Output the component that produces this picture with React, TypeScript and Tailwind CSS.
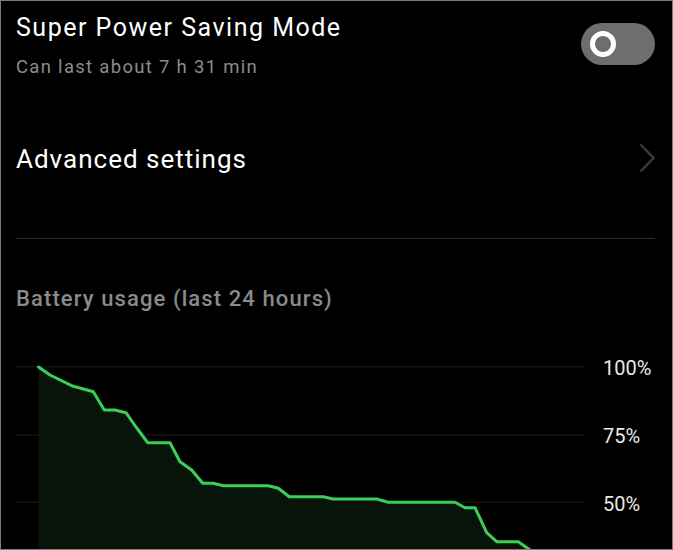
import React from "react"

// battery level samples, in chart-local pixels (x, y)
const levelPoints: [number, number][] = [
  [37.5, 17], [49, 25], [70.7, 35.7], [92.3, 41.7], [103.3, 60], [114, 60],
  [125, 62.7], [135, 77], [146.7, 92.7], [169, 92.7], [179, 111.7], [190.7, 120],
  [201.7, 133.3], [212.3, 133.3], [222.3, 135.7], [267.3, 135.7], [277.3, 138.3],
  [288.3, 146.7], [322.3, 146.7], [332, 149], [375.7, 149], [387.3, 152.3],
  [454, 152.3], [464, 157.7], [474, 157.7], [485.7, 182.7], [495.7, 191.7],
  [517.3, 191.7], [529, 200], [539, 210],
]

const gridY = [16.7, 85, 152.3]
const labels = ["100%", "75%", "50%"]

function UsageChart() {
  const line = levelPoints.map(([x, y]) => `${x},${y}`).join(" ")
  const first = levelPoints[0]
  const last = levelPoints[levelPoints.length - 1]
  const area = `${line} ${last[0]},220 ${first[0]},220`

  return (
    <div className="flex h-[199px] overflow-hidden">
      <svg width="589" height="199" className="shrink-0">
        {gridY.map((y) => (
          <line key={y} x1="15" x2="584" y1={y} y2={y} stroke="#151515" strokeWidth="1.5" />
        ))}
        <polygon points={area} fill="#06140a" />
        <polyline
          points={line}
          fill="none"
          stroke="#3ccf58"
          strokeWidth="3"
          strokeLinejoin="round"
          strokeLinecap="round"
        />
      </svg>
      <div className="flex flex-col gap-[48px] pl-[13px] pt-[8px] text-[20px] leading-[20px] text-[#e8e8e8]">
        {labels.map((l) => (
          <span key={l}>{l}</span>
        ))}
      </div>
    </div>
  )
}

export default function App() {
  return (
    <div
      className="w-[673px] h-[550px] overflow-hidden bg-black border border-[#7c7c7c]"
      style={{ fontFamily: "Roboto, 'Noto Sans', sans-serif" }}
    >
      {/* power saving toggle */}
      <div className="flex justify-between h-[99px] pl-[15px] pr-[17px] pt-[12px]">
        <div>
          <div className="text-[25px] leading-[29px] tracking-[1.5px] text-white">Super Power Saving Mode</div>
          <div className="mt-[14px] text-[18.5px] leading-[22px] tracking-[1.3px] text-[#8c8c8c]">
            Can last about 7 h 31 min
          </div>
        </div>
        <div className="mt-[10px] flex items-center w-[74px] h-[42px] rounded-full bg-[#6e6e6e]">
          <div className="ml-[9px] w-[26px] h-[26px] rounded-full border-[5px] border-white" />
        </div>
      </div>

      {/* advanced settings row */}
      <div className="flex justify-between h-[138px] pl-[15px] pr-[17px] pt-[44px]">
        <div className="text-[26px] leading-[30px] tracking-[1px] text-white">Advanced settings</div>
        <svg width="16" height="30" viewBox="0 0 16 30" className="-mt-px">
          <polyline points="1.5,1.5 14.5,15 1.5,28.5" fill="none" stroke="#3a3a3a" strokeWidth="2.5" />
        </svg>
      </div>

      <div className="ml-[15px] mr-[17px] h-px bg-[#2a2a2a]" />

      <div className="mt-[47px] pl-[15px] text-[22px] leading-[26px] tracking-[1.1px] font-medium text-[#8a8a8a]">
        Battery usage (last 24 hours)
      </div>

      <div className="mt-[38px]">
        <UsageChart />
      </div>
    </div>
  )
}
